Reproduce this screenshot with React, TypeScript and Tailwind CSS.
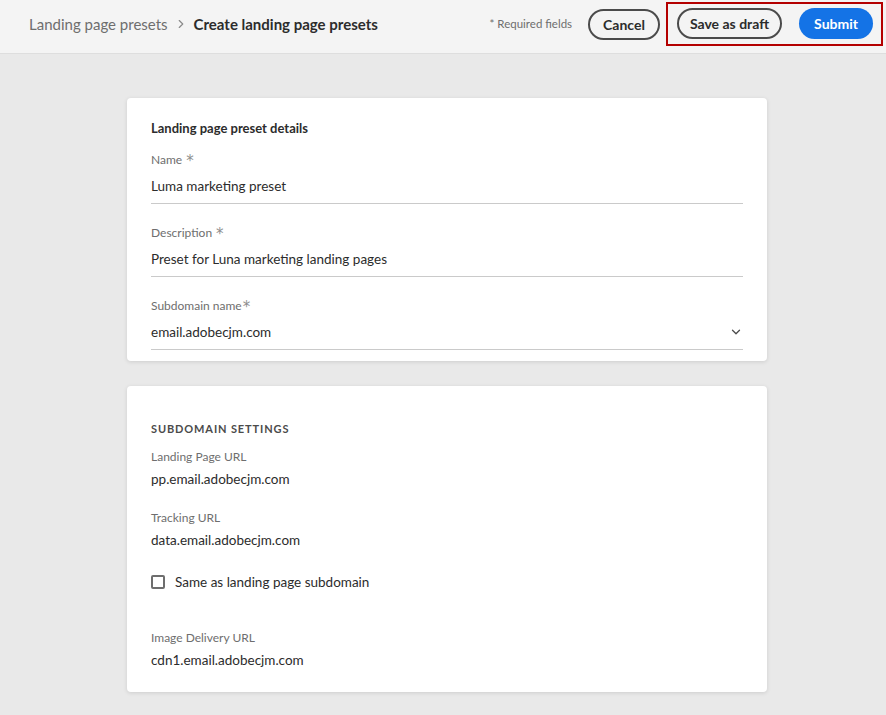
import { ChevronRight, ChevronDown } from "lucide-react";

const font = { fontFamily: "Lato, 'Noto Sans', sans-serif" };

function Field({ label, value, select, tight }: { label: string; value: string; select?: boolean; tight?: boolean }) {
  return (
    <div className="flex flex-col">
      <div className="flex h-[16px] items-center text-[12px] leading-[16px] text-[#6e6e6e]">
        {label}
        <span
          className={`${tight ? "ml-[1px]" : "ml-[4px]"} mt-[3px] text-[15px] leading-none text-[#8e8e8e]`}
          style={{ fontFamily: "'DejaVu Sans', sans-serif" }}
        >
          *
        </span>
      </div>
      <div className="mt-[9px] flex items-center justify-between border-b border-[#cacaca] pb-[8px]">
        <span className="text-[13.5px] leading-[18px] text-[#2c2c2c]">{value}</span>
        {select && <ChevronDown size={14} strokeWidth={2.2} className="text-[#4b4b4b]" />}
      </div>
    </div>
  );
}

function Info({ label, value }: { label: string; value: string }) {
  return (
    <div className="flex flex-col">
      <div className="text-[12px] leading-[16px] text-[#6e6e6e]">{label}</div>
      <div className="mt-[5px] text-[13.5px] leading-[18px] text-[#2c2c2c]">{value}</div>
    </div>
  );
}

export default function App() {
  return (
    <div style={font} className="min-h-[715px] w-full bg-[#e9e9e9]">
      {/* Top bar */}
      <header className="flex h-[54px] items-center justify-between border-b border-[#dedede] bg-[#f4f4f4] pb-[5px] pl-[29px] pr-[4px]">
        <div className="flex items-center text-[15px]">
          <span className="text-[#6e6e6e]">Landing page presets</span>
          <ChevronRight size={14} strokeWidth={2} className="mx-[6px] text-[#8a8a8a]" />
          <span className="font-bold text-[#2c2c2c]">Create landing page presets</span>
        </div>
        <div className="flex items-center">
          <span className="mr-[16px] text-[11.5px] text-[#6e6e6e]">* Required fields</span>
          <button className="h-[31px] rounded-full border-2 border-[#4b4b4b] px-[13px] text-[14px] font-bold text-[#2c2c2c]">
            Cancel
          </button>
          <div className="ml-[7px] flex items-center gap-[17px] pb-[6px] pl-[10px] pr-[9px] pt-[5px] outline outline-2 -outline-offset-1 outline-[#b40000]">
            <button className="h-[31px] rounded-full border-2 border-[#4b4b4b] px-[11px] text-[14px] font-bold text-[#2c2c2c]">
              Save as draft
            </button>
            <button className="h-[31px] rounded-full bg-[#1473e6] px-[15px] text-[14px] font-bold text-white">
              Submit
            </button>
          </div>
        </div>
      </header>

      <main className="flex flex-col items-center pl-[8px] pt-[44px]">
        {/* Card 1 */}
        <section className="w-[640px] rounded-[4px] bg-white px-[24px] pb-[11px] pt-[21px] shadow-[0_1px_4px_rgba(0,0,0,0.12)]">
          <h2 className="text-[13px] font-bold leading-[18px] text-[#2c2c2c]">Landing page preset details</h2>
          <div className="mt-[15px] flex flex-col gap-[21px]">
            <Field label="Name" value="Luma marketing preset" />
            <Field label="Description" value="Preset for Luna marketing landing pages" />
            <Field label="Subdomain name" value="email.adobecjm.com" select tight />
          </div>
        </section>

        {/* Card 2 */}
        <section className="mt-[25px] w-[640px] rounded-[4px] bg-white px-[24px] pb-[23px] pt-[36px] shadow-[0_1px_4px_rgba(0,0,0,0.12)]">
          <h3 className="text-[11px] font-bold uppercase leading-[14px] tracking-[0.08em] text-[#4b4b4b]">
            Subdomain settings
          </h3>
          <div className="mt-[13px] flex flex-col">
            <Info label="Landing Page URL" value="pp.email.adobecjm.com" />
            <div className="mt-[22px]">
              <Info label="Tracking URL" value="data.email.adobecjm.com" />
            </div>
            <label className="mt-[23px] flex items-center gap-[10px]">
              <span className="h-[14px] w-[14px] rounded-[2px] border-2 border-[#6e6e6e] bg-white" />
              <span className="text-[13.5px] text-[#2c2c2c]">Same as landing page subdomain</span>
            </label>
            <div className="mt-[38px]">
              <Info label="Image Delivery URL" value="cdn1.email.adobecjm.com" />
            </div>
          </div>
        </section>
      </main>
    </div>
  );
}
